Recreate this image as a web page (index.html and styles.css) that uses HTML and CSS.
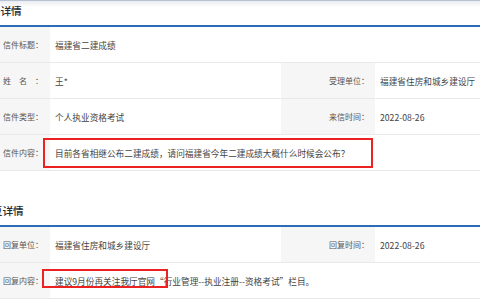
FILE: index.html
```html
<!DOCTYPE html>
<html lang="zh-CN">
<head>
    <meta charset="UTF-8">
    <meta name="viewport" content="width=device-width, initial-scale=1.0">
    <title>信件详情</title>
    <link rel="stylesheet" href="styles.css">
</head>
<body>
    <div class="page">
        <div class="head">信件详情</div>
        <div class="table">
            <div class="row">
                <div class="label"><span>信件标题：</span></div>
                <div class="value wide">福建省二建成绩</div>
            </div>
            <div class="row">
                <div class="label"><span>姓名：</span></div>
                <div class="value">王*</div>
                <div class="label"><span>受理单位：</span></div>
                <div class="value">福建省住房和城乡建设厅</div>
            </div>
            <div class="row">
                <div class="label"><span>信件类型：</span></div>
                <div class="value">个人执业资格考试</div>
                <div class="label"><span>来信时间：</span></div>
                <div class="value">2022-08-26</div>
            </div>
            <div class="row">
                <div class="label"><span>信件内容：</span></div>
                <div class="value wide">
                    目前各省相继公布二建成绩，请问福建省今年二建成绩大概什么时候会公布？
                    <i class="mark mark-q"></i>
                </div>
            </div>
        </div>

        <div class="head second">回复详情</div>
        <div class="table">
            <div class="row">
                <div class="label"><span>回复单位：</span></div>
                <div class="value">福建省住房和城乡建设厅</div>
                <div class="label"><span>回复时间：</span></div>
                <div class="value">2022-08-26</div>
            </div>
            <div class="row">
                <div class="label"><span>回复内容：</span></div>
                <div class="value wide">
                    建议9月份再关注我厅官网“行业管理--执业注册--资格考试”栏目。
                    <i class="mark mark-a"></i>
                </div>
            </div>
        </div>
    </div>
</body>
</html>
```

FILE: styles.css
```css
:root {
    --blue: #2c6cb6;
    --line: #e9e9e9;
    --label-bg: #f6f6f6;
    --mark: #ec2222;
}

body {
    margin: 0;
    font-family: "Microsoft YaHei", "Noto Sans CJK SC", sans-serif;
    color: #333;
    background: #fff;
    overflow: hidden;
}

.page {
    width: 600px;
    margin-left: -22px;
    border-top: 1px solid #b7c3d2;
    background: linear-gradient(#e9ecef, #fff) top / 100% 6px no-repeat;
}

.head {
    height: 24px;
    line-height: 20px;
    padding-left: 1px;
    font-size: 10.7px;
    font-weight: 500;
    color: #2b2b2b;
    border-bottom: 2px solid var(--blue);
}

.head.second {
    margin-top: 30px;
    padding-left: 3px;
}

.row {
    display: grid;
    grid-template-columns: 72px 231px 94px 1fr;
    height: 35px;
    border-bottom: 1px solid var(--line);
}

.label {
    display: flex;
    align-items: center;
    justify-content: flex-end;
    padding-right: 7px;
    background: var(--label-bg);
    font-size: 8px;
    color: #555;
}

.label span {
    display: inline-block;
    width: 40px;
    text-align: justify;
    text-align-last: justify;
    white-space: nowrap;
}

.row .label:nth-child(3) span {
    width: auto;
    text-align-last: auto;
}

.row .label:nth-child(3) {
    padding-right: 6px;
}

.value {
    position: relative;
    display: flex;
    align-items: center;
    padding-left: 5px;
    font-size: 8.67px;
    color: #444;
    white-space: nowrap;
}

.value.wide {
    grid-column: 2 / 5;
}

.mark {
    position: absolute;
    border: 2px solid var(--mark);
    box-sizing: border-box;
}

.mark-q {
    left: -7px;
    top: 3px;
    width: 330px;
    height: 30px;
}

.mark-a {
    left: -8px;
    top: 6px;
    width: 126px;
    height: 19px;
}
```
